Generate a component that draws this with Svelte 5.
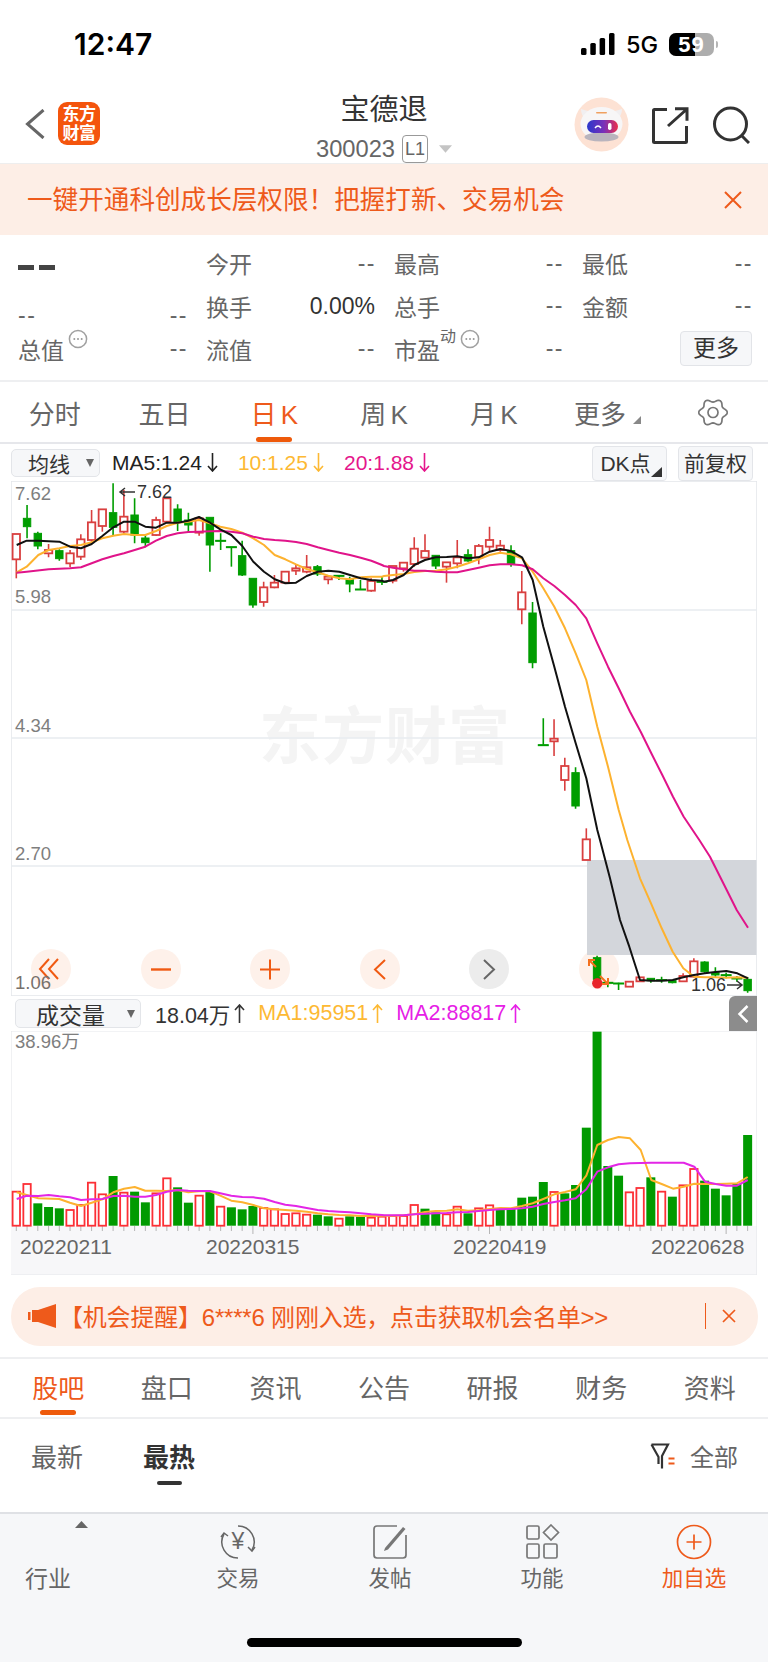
<script>
  // price candles: [high, bodyTop, bodyBottom, low, up?] read off the chart, in crop units
  const up = 1;
  const dn = 0;
  const scale = (origin, rows) =>
    rows.map(([h, t, b, l, dir]) => [origin + h / 3, origin + t / 3, origin + b / 3, origin + l / 3, dir]);

  const candles = [
    ...scale(470, [
      [192, 192, 268, 325, up], [105, 145, 170, 205, dn], [185, 190, 228, 238, dn], [222, 240, 250, 262, up],
      [238, 242, 266, 272, dn], [240, 250, 280, 292, up], [193, 208, 260, 270, up], [120, 157, 210, 215, up],
      [118, 118, 168, 185, up], [40, 128, 172, 195, dn], [60, 140, 185, 190, up], [85, 135, 195, 220, dn],
      [195, 204, 218, 232, dn], [140, 150, 195, 198, up], [85, 85, 155, 160, up], [103, 117, 155, 183, dn],
      [128, 150, 165, 188, dn], [140, 145, 188, 197, up], [142, 142, 225, 305, dn], [190, 211, 213, 240, dn],
      [230, 230, 232, 290, dn], [212, 257, 315, 318, dn], [325, 325, 405, 413, dn], [335, 352, 396, 410, up],
      [315, 338, 352, 355, up], [305, 305, 338, 340, up], [285, 295, 302, 315, up], [255, 292, 305, 310, up],
      [285, 290, 312, 318, dn], [315, 320, 328, 343, up], [316, 316, 318, 330, dn], [320, 328, 342, 367, dn],
      [330, 357, 359, 359, dn], [325, 333, 362, 365, up], [320, 334, 336, 345, dn]
    ]),
    ...scale(500, [
      [198, 198, 242, 250, up], [188, 188, 205, 215, up], [112, 146, 192, 200, up], [103, 153, 173, 175, up],
      [166, 166, 198, 207, dn], [187, 187, 200, 248, up], [120, 172, 190, 205, up], [148, 164, 183, 185, dn],
      [132, 138, 172, 193, up], [80, 120, 140, 155, up], [120, 137, 150, 155, up], [136, 152, 192, 200, dn],
      [213, 277, 328, 373, up], [306, 339, 488, 505, dn], [655, 734, 736, 737, dn], [658, 716, 724, 768, up],
      [773, 798, 840, 872, up], [802, 818, 918, 926, dn], [985, 1018, 1080, 1080, up]
    ]),
    ...scale(840, [
      [347, 353, 418, 440, dn], [422, 427, 429, 442, dn], [428, 429, 431, 450, dn], [425, 425, 440, 440, up],
      [412, 412, 424, 424, up], [415, 415, 422, 428, dn], [410, 419, 421, 428, dn], [422, 422, 428, 430, dn],
      [400, 408, 424, 426, up], [355, 364, 410, 412, up], [364, 366, 395, 398, dn], [382, 398, 405, 410, dn],
      [398, 404, 406, 415, dn], [408, 414, 416, 425, dn], [412, 418, 452, 458, dn]
    ])
  ];

  const xAt = (i) => 16.3 + i * 10.755;

  const line = (...parts) =>
    parts
      .flatMap(([ox, oy, pts]) => pts.map(([x, y]) => `${(ox + x / 3).toFixed(1)},${(oy + y / 3).toFixed(1)}`))
      .join(" ");

  const ma5 = line(
    [0, 470, [[50,225],[80,212],[115,212],[178,215],[210,230],[243,235],[275,222],[307,198],[340,172],[372,155],[404,155],[436,170],[468,173],[500,158],[533,158],[565,152],[597,141],[630,158],[661,178],[694,195],[727,228],[760,275],[792,305],[824,328],[856,340],[888,338],[920,318],[953,305],[985,302],[1018,305],[1050,315],[1082,325],[1114,330],[1146,332]]],
    [384, 500, [[0,245],[27,240],[59,225],[91,195],[123,180],[155,172],[188,171],[220,169],[252,175],[284,172],[317,155],[349,147],[381,153],[414,172],[446,240],[478,380],[511,500],[543,620],[575,730],[607,835],[640,990]]],
    [540, 840, [[180,0],[210,115],[240,240],[268,320],[300,420],[333,422],[365,422],[398,420],[430,412],[462,405],[494,400],[526,396],[559,393],[592,400],[624,415]]]
  );
  const ma10 = line(
    [0, 470, [[50,307],[80,290],[115,255],[146,240],[178,235],[210,228],[243,225],[275,217],[307,205],[340,197],[372,192],[404,195],[436,195],[468,183],[500,168],[533,158],[565,155],[597,150],[630,160],[661,170],[694,177],[727,188],[760,205],[792,225],[824,255],[856,268],[888,283],[920,297],[953,307],[985,317],[1018,325],[1050,328],[1082,322],[1114,320],[1146,320]]],
    [384, 500, [[0,228],[27,225],[59,222],[91,216],[123,213],[155,212],[188,208],[220,200],[252,190],[284,178],[317,165],[349,158],[381,163],[414,175],[446,215],[478,265],[511,320],[543,385],[575,460],[607,540],[640,680],[672,800],[704,930]]],
    [540, 840, [[262,0],[300,115],[333,190],[365,265],[398,335],[430,385],[462,410],[494,412],[526,412],[559,413],[592,412],[624,413]]]
  );
  const ma20 = line(
    [0, 470, [[50,308],[80,305],[146,298],[210,295],[243,292],[275,280],[307,268],[340,258],[372,250],[404,240],[436,230],[468,212],[500,198],[533,190],[565,186],[597,185],[630,184],[661,183],[694,185],[727,190],[760,200],[792,207],[824,210],[856,212],[888,216],[920,222],[953,232],[985,240],[1018,248],[1050,255],[1082,263],[1114,272],[1146,285]]],
    [384, 500, [[0,198],[27,203],[59,208],[91,212],[123,212],[155,215],[188,217],[220,217],[252,210],[284,203],[317,196],[349,193],[381,193],[414,196],[446,208],[478,235],[511,258],[543,285],[575,315],[607,355],[640,430],[672,500],[704,565],[738,635],[770,695],[802,760],[835,825],[867,890],[899,950]]],
    [540, 840, [[478,0],[510,50],[560,150],[590,210],[624,263]]]
  );

  // volume bars: top in crop units, red = hollow
  const volLeft = [
    [185,1],[162,1],[220,0],[231,0],[235,0],[240,1],[225,1],[158,1],[193,1],[138,0],[188,1],[185,0],[217,0],[190,1],[145,1],[172,0],[218,0],[197,1],[185,0],[230,1],[232,0],[238,0],[228,0],[234,1],[238,1],[252,1],[250,1],[254,1],[254,0],[259,0],[266,1],[259,0],[260,0],[263,1],[260,1]
  ];
  const volRight = [
    [558,1],[558,1],[525,1],[536,0],[547,0],[553,1],[530,1],[550,0],[535,1],[526,1],[537,0],[537,0],[503,0],[500,0],[456,0],[486,1],[490,0],[465,0],[293,0],[5,0],[408,0],[437,0],[487,1],[474,1],[442,0],[485,1],[500,0],[466,1],[417,1],[452,0],[476,0],[496,0],[462,0],[315,0]
  ];
  const volBase = 1225.7;
  const volumes = [
    ...volLeft.map(([t, r]) => [1130 + t / 3, r]),
    ...volRight.map(([t, r]) => [1030 + t / 3, r])
  ];

  const volMa1 = line(
    [0, 1130, [[50,187],[80,195],[115,205],[178,207],[210,218],[243,228],[275,218],[307,208],[340,187],[372,176],[404,171],[436,182],[468,182],[500,183],[533,180],[565,187],[597,184],[630,184],[661,197],[694,212],[727,217],[760,225],[792,235],[824,238],[856,240],[888,242],[920,245],[953,250],[985,253],[1018,255],[1050,256],[1082,258],[1114,258],[1146,257]]],
    [384, 1030, [[0,557],[27,557],[59,556],[91,553],[123,546],[155,543],[188,542],[220,538],[252,542],[284,541],[317,537],[349,534],[381,535],[414,528],[446,520],[478,507],[511,493],[543,486],[575,478],[607,437],[640,345],[672,330],[704,321],[738,325],[770,360],[802,450],[835,463],[867,476],[899,470],[931,461],[963,462],[995,462],[1027,461],[1059,460],[1091,441]]]
  );
  const volMa2 = line(
    [0, 1130, [[50,207],[80,197],[115,198],[146,195],[178,199],[210,202],[243,210],[275,208],[307,207],[340,198],[372,197],[404,200],[436,200],[468,195],[500,185],[533,180],[565,182],[597,183],[630,183],[661,190],[694,197],[727,201],[760,202],[792,206],[824,216],[856,224],[888,228],[920,234],[953,240],[985,243],[1018,245],[1050,247],[1082,250],[1114,253],[1146,255]]],
    [384, 1030, [[0,556],[27,556],[59,556],[91,553],[123,551],[155,550],[188,549],[220,547],[252,546],[284,543],[317,540],[349,538],[381,537],[414,535],[446,530],[478,522],[511,516],[543,511],[575,505],[607,478],[640,425],[672,412],[704,403],[738,400],[770,399],[802,398],[835,398],[867,398],[899,398],[931,410],[963,455],[995,462],[1027,467],[1059,467],[1091,450]]]
  );

  const periods = ["分时", "五日", "日K", "周K", "月K"];
  const infoTabs = ["股吧", "盘口", "资讯", "公告", "研报", "财务", "资料"];

  // six lobes, points left and right
  const gearOutline = Array.from({ length: 72 }, (_, i) => {
    const a = (i * 5 * Math.PI) / 180;
    const r = 12 + 1.6 * Math.cos(6 * a);
    return `${(15 + r * 1.05 * Math.cos(a)).toFixed(2)},${(13.5 + r * Math.sin(a)).toFixed(2)}`;
  }).join(" ");
</script>

{#snippet info()}
  <svg class="info" viewBox="0 0 20 20" fill="none">
    <circle cx="10" cy="10" r="8.6" stroke="#a0a0a0" stroke-width="1.500" />
    <circle cx="6.300" cy="10" r="1" fill="#999" />
    <circle cx="10" cy="10" r="1" fill="#999" />
    <circle cx="13.700" cy="10" r="1" fill="#999" />
  </svg>
{/snippet}

{#snippet arrow(color, rising)}
  <svg class="arrow" viewBox="0 0 11 19" fill="none" stroke={color} stroke-width="1.600">
    {#if rising}
      <path d="M5.500 19V1.500M1 6l4.500-5L10 6" />
    {:else}
      <path d="M5.500 0v17.500M1 13l4.500 5L10 13" />
    {/if}
  </svg>
{/snippet}

<div class="page">
  <div class="status">
    <span class="time">12:47</span>
    <div class="status-right">
      <svg class="signal" viewBox="0 0 34 22" fill="#000">
        <rect x="0" y="15" width="5.500" height="7" rx="1.500" />
        <rect x="9.300" y="10" width="5.500" height="12" rx="1.500" />
        <rect x="18.600" y="5" width="5.500" height="17" rx="1.500" />
        <rect x="28" y="0" width="5.500" height="22" rx="1.500" />
      </svg>
      <span class="net">5G</span>
      <div class="battery"><span class="level"></span><span class="pct">59</span></div>
      <span class="nub"></span>
    </div>
  </div>

  <header class="nav">
    <div class="nav-left">
      <svg class="back" viewBox="0 0 20 30" fill="none" stroke="#666" stroke-width="3">
        <path d="M18.500 1 2.500 15l16 14" />
      </svg>
      <div class="logo">东方<br />财富</div>
    </div>
    <div class="nav-title">
      <div class="name">宝德退</div>
      <div class="code">
        <span>300023</span>
        <span class="l1">L1</span>
        <svg class="code-tri" viewBox="0 0 14 8"><path d="M0 0h14L7 8z" fill="#c4c4c4" /></svg>
      </div>
    </div>
    <div class="nav-right">
      <svg class="avatar" viewBox="0 0 55 55">
        <defs>
          <linearGradient id="visor" x1="0" x2="1" y1="0" y2="0">
            <stop offset="0" stop-color="#2a38cc" />
            <stop offset="0.55" stop-color="#7a30b8" />
            <stop offset="1" stop-color="#ec2f4a" />
          </linearGradient>
        </defs>
        <circle cx="27.500" cy="27.500" r="27" fill="#fde2d4" />
        <path d="M7 12q0 7 5 10l5-7zM48 12q0 7-5 10l-5-7z" fill="#f1eff1" />
        <ellipse cx="27.500" cy="27" rx="21" ry="17" fill="#f7f6f7" />
        <ellipse cx="27.500" cy="40" rx="17" ry="4.500" fill="#b9b4bd" />
        <rect x="13" y="23" width="31" height="13" rx="6.500" fill="url(#visor)" />
        <path d="M21 31q3-4 6 0" fill="none" stroke="#fff" stroke-width="1.400" />
        <rect x="34" y="26" width="3.500" height="7" rx="1.700" fill="#fff" />
        <rect x="22" y="15" width="11" height="1.600" rx="0.800" fill="#f0a060" />
      </svg>
      <svg class="share" viewBox="0 0 37 37" fill="none" stroke="#333" stroke-width="3">
        <path d="M15 2.500H2.500a1 1 0 0 0-1 1v31a1 1 0 0 0 1 1h31a1 1 0 0 0 1-1V19" />
        <path d="M16 19 35 2M23 1.800h12v12" />
      </svg>
      <svg class="search" viewBox="0 0 38 38" fill="none" stroke="#333" stroke-width="3">
        <circle cx="18.500" cy="18" r="16" />
        <path d="m29 29 8 8" />
      </svg>
    </div>
  </header>

  <div class="promo">
    <span>一键开通科创成长层权限！把握打新、交易机会</span>
    <svg class="promo-x" viewBox="0 0 18 18" fill="none" stroke="#ee5a1b" stroke-width="2">
      <path d="m1 1 16 16M17 1 1 17" />
    </svg>
  </div>

  <section class="stats">
    <div class="cell"><span class="big"><i></i><i></i></span></div>
    <div class="cell"><span class="k">今开</span><span class="v">--</span></div>
    <div class="cell"><span class="k">最高</span><span class="v">--</span></div>
    <div class="cell"><span class="k">最低</span><span class="v">--</span></div>

    <div class="cell low"><span class="v">--</span><span class="v">--</span></div>
    <div class="cell"><span class="k">换手</span><span class="v num">0.00%</span></div>
    <div class="cell"><span class="k">总手</span><span class="v">--</span></div>
    <div class="cell"><span class="k">金额</span><span class="v">--</span></div>

    <div class="cell"><span class="k with-icon">总值{@render info()}</span><span class="v">--</span></div>
    <div class="cell"><span class="k">流值</span><span class="v">--</span></div>
    <div class="cell"><span class="k with-icon">市盈<sup>动</sup>{@render info()}</span><span class="v">--</span></div>
    <div class="cell more-cell"><span class="more">更多</span></div>
  </section>

  <nav class="periods">
    {#each periods as p, i}
      <span class="period" class:active={i === 2}>{p.replace("K", " K")}</span>
    {/each}
    <span class="period more-tab">更多<svg class="corner" viewBox="0 0 8 8"><path d="M8 0v8H0z" fill="#888" /></svg></span>
    <span class="period">
      <svg class="gear" viewBox="0 0 30 27" fill="none" stroke="#777" stroke-width="1.700">
        <polygon points={gearOutline} stroke-linejoin="round" />
        <circle cx="15" cy="13.500" r="5" />
      </svg>
    </span>
  </nav>

  <div class="ma-row">
    <span class="select ma-select">均线<svg class="tri" viewBox="0 0 8 8"><path d="M0 0h8L4 8z" fill="#666" /></svg></span>
    <span class="ma black">MA5:1.24{@render arrow("#222", false)}</span>
    <span class="ma orange">10:1.25{@render arrow("#fdb933", false)}</span>
    <span class="ma pink">20:1.88{@render arrow("#e5168c", false)}</span>
    <span class="chip dk">DK点<svg class="chip-corner" viewBox="0 0 11 10"><path d="M11 0v10H0z" fill="#333" /></svg></span>
    <span class="chip">前复权</span>
  </div>

  <div class="chart">
    <div class="controls">
      <span class="ctl">
        <svg viewBox="0 0 40 40" fill="none" stroke="#f05a12" stroke-width="2"><path d="M18 10 9 20l9 10M27 10l-9 10 9 10" /></svg>
      </span>
      <span class="ctl"><svg viewBox="0 0 40 40" fill="none" stroke="#f05a12" stroke-width="2.400"><path d="M10 20.500h20" /></svg></span>
      <span class="ctl"><svg viewBox="0 0 40 40" fill="none" stroke="#f05a12" stroke-width="2"><path d="M10 20.500h20M20 10.500v20" /></svg></span>
      <span class="ctl"><svg viewBox="0 0 40 40" fill="none" stroke="#f05a12" stroke-width="2"><path d="M25 11l-10 9.500 10 9.500" /></svg></span>
      <span class="ctl off"><svg viewBox="0 0 40 40" fill="none" stroke="#666" stroke-width="2"><path d="M15 11l10 9.500-10 9.500" /></svg></span>
      <span class="ctl"></span>
    </div>
    <svg class="plot" viewBox="11 481 746 515">
      <text class="watermark" x="385" y="759" text-anchor="middle">东方财富</text>
      <rect x="587" y="860" width="170" height="95" fill="#d3d6db" />
      <path d="M11 481H757M11 996H757M11 481V996M757 481V996" stroke="#e4e6ea" stroke-width="1.500" fill="none" />
      <path d="M11 610H757M11 738H757M11 866H587" stroke="#e8ebef" stroke-width="1.500" />

      {#each candles as [h, t, b, l, dir], i}
        {@const x = xAt(i)}
        {@const color = dir ? "#d93f3f" : "#009d00"}
        <path d="M{x} {h}V{t}M{x} {b}V{l}" stroke={color} stroke-width="1.600" />
        <rect
          x={x - (b - t < 2 ? 5 : 3.700)}
          y={t}
          width={b - t < 2 ? 10 : 7.400}
          height={Math.max(b - t, 1)}
          fill={dir ? "#fff" : color}
          stroke={color}
          stroke-width={dir ? 1.800 : 1}
        />
      {/each}

      <polyline points={ma10} class="ma-line" stroke="#fdb22f" />
      <polyline points={ma20} class="ma-line" stroke="#e0148a" />
      <polyline points={ma5} class="ma-line" stroke="#111" />

      <text class="axis" x="15" y="500">7.62</text>
      <text class="axis" x="15" y="603">5.98</text>
      <text class="axis" x="15" y="732">4.34</text>
      <text class="axis" x="15" y="860">2.70</text>
      <text class="axis low-label" x="15" y="989">1.06</text>

      <path d="M120 492h15M125 488l-5 4 5 4" stroke="#333" stroke-width="1.500" fill="none" />
      <text class="peak" x="137" y="498">7.62</text>
      <text class="peak" x="691" y="991">1.06</text>
      <path d="M727 985h15M737 981l5 4-5 4" stroke="#333" stroke-width="1.500" fill="none" />

      <circle cx="597.300" cy="983.300" r="5.200" fill="#e8242a" />
      <path d="M589 966v-6h6M589 960l7 7M608 978v6h-6M608 984l-8-8" stroke="#f4701e" stroke-width="2" fill="none" />
    </svg>
  </div>

  <div class="vol-row">
    <span class="select vol-select">成交量<svg class="tri" viewBox="0 0 8 8"><path d="M0 0h8L4 8z" fill="#666" /></svg></span>
    <span class="ma dark">18.04万{@render arrow("#333", true)}</span>
    <span class="ma orange">MA1:95951{@render arrow("#fdb933", true)}</span>
    <span class="ma magenta">MA2:88817{@render arrow("#e620e6", true)}</span>
    <span class="fold">
      <svg viewBox="0 0 12 20" fill="none" stroke="#fff" stroke-width="2.500"><path d="M10.500 2 2.500 10l8 8" /></svg>
    </span>
  </div>

  <div class="volume">
    <svg class="plot-vol" viewBox="11 1031 746 244">
      <rect x="11" y="1226" width="746" height="49" fill="#f7f7f9" />
      <path d="M11 1031H757M11 1031V1226M757 1031V1275M11 1275H757" stroke="#e6e8ec" stroke-width="1.200" fill="none" />

      {#each volumes as [top, red], i}
        {@const x = xAt(i)}
        <path d="M{x} 1226V{i % 22 === 0 && i > 0 ? 1234 : 1231}" stroke="#b5b5b5" stroke-width="1" />
        {#if red}
          <rect x={x - 3.700} y={top} width="7.400" height={volBase - top} fill="#fff" stroke="#fc2f35" stroke-width="1.800" />
        {:else}
          <rect x={x - 4.500} y={top} width="9" height={volBase - top} fill="#009a00" />
        {/if}
      {/each}

      <polyline points={volMa1} class="ma-line" stroke="#fdb22f" />
      <polyline points={volMa2} class="ma-line" stroke="#e326e6" />

      <text class="axis" x="15" y="1048">38.96万</text>
      <text class="date" x="20" y="1254">20220211</text>
      <text class="date" x="206" y="1254">20220315</text>
      <text class="date" x="453" y="1254">20220419</text>
      <text class="date" x="651" y="1254">20220628</text>
    </svg>
  </div>

  <div class="notice">
    <svg class="horn" viewBox="0 0 28 24" fill="#ee5a1b">
      <rect x="0" y="8" width="2.500" height="8" />
      <path d="M4 6h6L28 0v24L10 18H4z" />
    </svg>
    <span class="notice-text">【机会提醒】6****6 刚刚入选，点击获取机会名单&gt;&gt;</span>
    <span class="notice-sep"></span>
    <svg class="notice-x" viewBox="0 0 14 14" fill="none" stroke="#ee5a1b" stroke-width="1.700">
      <path d="m1 1 12 12M13 1 1 13" />
    </svg>
  </div>

  <nav class="info-tabs">
    {#each infoTabs as t, i}
      <span class="info-tab" class:active={i === 0}>{t}</span>
    {/each}
  </nav>

  <div class="sub-tabs">
    <span class="sub">最新</span>
    <span class="sub hot">最热</span>
    <span class="filter">
      <svg viewBox="0 0 25 26" fill="none" stroke="#333" stroke-width="2.200">
        <path d="M1.500 1.500h16.500L12 13v12.500M1.500 1.500 8.500 14v7" />
        <path d="M18.500 15.500h6M18.500 20.500h6" stroke="#ee5a1b" />
      </svg>
      全部
    </span>
  </div>

  <footer class="bottom">
    <div class="item industry">
      <svg class="up-tri" viewBox="0 0 13 7"><path d="M0 7h13L6.500 0z" fill="#666" /></svg>
      <span>行业</span>
    </div>
    <div class="item">
      <svg class="icon" viewBox="0 0 36 36" fill="none" stroke="#666" stroke-width="1.500">
        <path d="M18 2A16 16 0 0 1 32 26M18 34A16 16 0 0 1 4 10" />
        <path d="m28 23 4 4 3-4M1 13l3-4 4 3" />
      </svg>
      <span class="yen">¥</span>
      <span>交易</span>
    </div>
    <div class="item">
      <svg class="icon" viewBox="0 0 36 36" fill="none" stroke="#777" stroke-width="1.700">
        <path d="M25 2H5Q2 2 2 5v26q0 3 3 3h26q3 0 3-3V11" />
        <path d="M13 24 31 3l2.500 2L16 25.500l-4 1.500z" fill="#777" stroke="none" />
      </svg>
      <span>发帖</span>
    </div>
    <div class="item">
      <svg class="icon" viewBox="0 0 36 36" fill="none" stroke="#777" stroke-width="1.700">
        <rect x="3" y="2" width="12" height="13" rx="1.500" />
        <path d="m27 1 7.500 7.500L27 16l-7.500-7.500z" />
        <rect x="3" y="20" width="12" height="14" rx="1.500" />
        <rect x="20" y="20" width="13" height="14" rx="1.500" />
      </svg>
      <span>功能</span>
    </div>
    <div class="item accent">
      <svg class="icon" viewBox="0 0 36 36" fill="none" stroke="#ee5a1b" stroke-width="1.700">
        <circle cx="18" cy="18" r="16.500" />
        <path d="M18 10.500v15M10.500 18h15" />
      </svg>
      <span>加自选</span>
    </div>
    <div class="home"></div>
  </footer>
</div>

<style>
  :global(body) {
    margin: 0;
    background: #fff;
  }
  .page {
    width: 768px;
    height: 1662px;
    overflow: hidden;
    background: #fff;
    font-family: "Liberation Sans", "Noto Sans CJK SC", sans-serif;
    color: #666;
  }

  /* status bar */
  .status {
    height: 82px;
    box-sizing: border-box;
    padding: 26px 50px 0 74px;
    display: flex;
    justify-content: space-between;
    align-items: flex-start;
  }
  .time {
    font-family: Inter, sans-serif;
    font-size: 30px;
    font-weight: 600;
    line-height: 36px;
    color: #000;
  }
  .status-right {
    display: flex;
    align-items: center;
    height: 36px;
    position: relative;
  }
  .signal {
    width: 34px;
    height: 22px;
  }
  .net {
    font-family: Inter, sans-serif;
    font-size: 23.500px;
    font-weight: 500;
    color: #000;
    margin: 0 11px 0 11px;
  }
  .battery {
    position: relative;
    width: 45px;
    height: 23px;
    border-radius: 7px;
    background: #adadad;
    display: flex;
    align-items: center;
    justify-content: center;
  }
  .level {
    position: absolute;
    inset: 0 19px 0 0;
    background: #000;
    border-radius: 7px 0 0 7px;
  }
  .pct {
    position: relative;
    font-size: 22px;
    font-weight: 700;
    font-family: "Liberation Sans", sans-serif;
    color: #fff;
    line-height: 23px;
    letter-spacing: 1px;
  }
  .nub {
    width: 2px;
    height: 7px;
    margin-left: 2px;
    background: #b5b5b5;
    border-radius: 0 2px 2px 0;
  }

  /* title bar */
  .nav {
    height: 82px;
    box-sizing: border-box;
    padding: 0 18px;
    display: grid;
    grid-template-columns: 1fr auto 1fr;
    align-items: start;
    border-bottom: 1px solid #eee;
  }
  .nav-left {
    display: flex;
    align-items: center;
    gap: 13px;
    padding: 20px 0 0 7px;
  }
  .back {
    width: 20px;
    height: 30px;
  }
  .logo {
    width: 42px;
    height: 43px;
    border-radius: 9px;
    background: #f4550d;
    color: #fff;
    font-size: 17px;
    font-weight: 700;
    line-height: 19px;
    text-align: center;
    padding-top: 3px;
    box-sizing: border-box;
    letter-spacing: -0.500px;
  }
  .nav-title {
    text-align: center;
  }
  .name {
    font-size: 29px;
    line-height: 40px;
    margin-top: 8px;
    color: #333;
  }
  .code {
    display: flex;
    align-items: center;
    justify-content: center;
    gap: 7px;
    margin-top: 5px;
    font-size: 23.700px;
    line-height: 26px;
    color: #666;
  }
  .l1 {
    border: 1px solid #999;
    border-radius: 4px;
    padding: 0 2px;
    font-size: 18px;
    line-height: 26px;
  }
  .code-tri {
    width: 13px;
    height: 8px;
    margin-left: 4px;
  }
  .nav-right {
    display: flex;
    align-items: flex-start;
    justify-content: flex-end;
    padding-top: 15px;
  }
  .avatar {
    width: 55px;
    height: 55px;
    margin-right: 23px;
  }
  .share {
    width: 37px;
    height: 37px;
    margin: 10px 23px 0 0;
  }
  .search {
    width: 38px;
    height: 38px;
    margin-top: 9px;
  }

  .promo {
    height: 71px;
    box-sizing: border-box;
    padding: 0 26px 4px 27px;
    background: #fdeee6;
    display: flex;
    align-items: center;
    justify-content: space-between;
    color: #ee5a1b;
    font-size: 25.600px;
  }
  .promo-x {
    width: 18px;
    height: 18px;
    margin-top: 4px;
  }

  /* quote grid */
  .stats {
    height: 147px;
    box-sizing: border-box;
    padding: 7px 16px 0 18px;
    display: grid;
    grid-template-columns: 169px 169px 169px 170px;
    grid-template-rows: 42px 43px 43px;
    column-gap: 19px;
    border-bottom: 2px solid #eeeff1;
    font-size: 23px;
  }
  .cell {
    display: flex;
    align-items: center;
    justify-content: space-between;
    white-space: nowrap;
  }
  .cell.low {
    padding-top: 19px;
  }
  .big {
    display: flex;
    gap: 5px;
    margin-top: 9px;
  }
  .big i {
    width: 16px;
    height: 5px;
    background: #444;
  }
  .k {
    color: #666;
  }
  .with-icon {
    display: flex;
    align-items: flex-start;
  }
  sup {
    font-size: 16px;
    line-height: 16px;
    margin-top: -3px;
  }
  .info {
    width: 20px;
    height: 20px;
    margin-top: -3px;
    margin-left: 4px;
  }
  .v {
    color: #666;
    letter-spacing: 1.500px;
    margin-right: -1px;
  }
  .v.num {
    color: #333;
    letter-spacing: 0;
    margin-right: 0;
    font-size: 23px;
    padding-top: 2px;
  }
  .more-cell {
    justify-content: flex-end;
  }
  .more {
    width: 72px;
    height: 35px;
    line-height: 33px;
    box-sizing: border-box;
    text-align: center;
    color: #333;
    background: #f6f7f9;
    border: 1px solid #e2e4e8;
    border-radius: 4px;
  }

  .periods {
    height: 62px;
    box-sizing: border-box;
    display: grid;
    grid-template-columns: repeat(7, 1fr);
    align-items: center;
    border-bottom: 2px solid #e6e7eb;
    font-size: 26px;
    color: #666;
  }
  .period {
    position: relative;
    display: flex;
    justify-content: center;
    align-items: center;
    white-space: pre;
    word-spacing: -3px;
  }
  .more-tab {
    padding-right: 7px;
  }
  .period.active {
    color: #ee5a1b;
  }
  .period.active::after {
    content: "";
    position: absolute;
    left: 50%;
    margin-left: -18px;
    bottom: -11px;
    width: 36px;
    height: 5px;
    border-radius: 3px;
    background: #ee5a0b;
  }
  .corner {
    position: absolute;
    left: 84px;
    top: 22px;
    width: 8px;
    height: 8px;
  }
  .gear {
    width: 30px;
    height: 27px;
  }

  .ma-row {
    height: 37px;
    display: flex;
    align-items: center;
    padding: 0 15px 0 11px;
    position: relative;
  }
  .select {
    display: flex;
    align-items: center;
    justify-content: space-between;
    box-sizing: border-box;
    background: #f6f7f9;
    border: 1px solid #e3e5e9;
    border-radius: 5px;
    color: #333;
    font-size: 21px;
  }
  .ma-select {
    width: 89px;
    height: 28px;
    padding: 0 5px 0 16px;
  }
  .tri {
    width: 8px;
    height: 8px;
  }
  .ma {
    display: inline-flex;
    align-items: center;
    gap: 5px;
    font-size: 21px;
    white-space: nowrap;
  }
  .arrow {
    width: 11px;
    height: 19px;
  }
  .black {
    margin-left: 12px;
    color: #222;
  }
  .orange {
    margin-left: 20px;
    color: #fdb933;
  }
  .pink {
    margin-left: 20px;
    color: #e5168c;
  }
  .chip {
    position: relative;
    box-sizing: border-box;
    width: 75px;
    height: 35px;
    line-height: 33px;
    text-align: center;
    background: #f6f7f9;
    border: 1px solid #e3e5e9;
    border-radius: 4px;
    font-size: 21px;
    color: #333;
    align-self: flex-end;
  }
  .dk {
    margin-left: auto;
    margin-right: 11px;
    padding-right: 8px;
  }
  .chip-corner {
    position: absolute;
    right: 4px;
    bottom: 3px;
    width: 11px;
    height: 10px;
  }

  .chart {
    position: relative;
    height: 515px;
    margin-left: 11px;
    width: 746px;
  }
  .plot {
    position: relative;
    z-index: 1;
    display: block;
    width: 746px;
    height: 515px;
  }
  .controls {
    position: absolute;
    left: 20px;
    top: 468px;
    display: flex;
    gap: 69.500px;
  }
  .ctl {
    width: 40px;
    height: 40px;
    border-radius: 50%;
    background: #fef1ea;
  }
  .ctl.off {
    background: #ececec;
  }
  .ctl svg {
    display: block;
    width: 40px;
    height: 40px;
  }
  .ma-line {
    fill: none;
    stroke-width: 2;
    stroke-linejoin: round;
  }
  .watermark {
    font-family: "Noto Sans CJK SC", sans-serif;
    font-size: 62px;
    font-weight: 700;
    fill: #f4f4f4;
    letter-spacing: 1px;
  }
  .axis {
    font-family: "Liberation Sans", "Noto Sans CJK SC", sans-serif;
    font-size: 18.500px;
    fill: #7e7e7e;
  }
  .low-label {
    fill: #76706c;
  }
  .peak {
    font-family: "Liberation Sans", sans-serif;
    font-size: 18px;
    fill: #333;
  }
  .date {
    font-family: "Liberation Sans", sans-serif;
    font-size: 21px;
    fill: #666;
  }

  .vol-row {
    height: 35px;
    display: flex;
    align-items: center;
    padding: 0 11px 0 15px;
  }
  .vol-row .ma {
    font-size: 21.500px;
    gap: 4px;
  }
  .vol-select {
    width: 126px;
    height: 29px;
    padding: 0 5px 0 20px;
    font-size: 23px;
  }
  .dark {
    margin-left: 14px;
    color: #333;
  }
  .vol-row .orange {
    margin-left: 13px;
  }
  .magenta {
    margin-left: 13px;
    color: #e620e6;
  }
  .fold {
    margin-left: auto;
    width: 28px;
    height: 35px;
    background: #8c8c8c;
    border-top-left-radius: 6px;
    display: flex;
    align-items: center;
    justify-content: center;
  }
  .fold svg {
    width: 12px;
    height: 20px;
  }

  .volume {
    height: 244px;
    margin-left: 11px;
  }
  .plot-vol {
    display: block;
    width: 746px;
    height: 244px;
  }

  .notice {
    height: 59px;
    box-sizing: border-box;
    margin: 12px 10px 0 11px;
    padding: 0 22px 2px 17px;
    border-radius: 29px;
    background: #fdeee6;
    display: flex;
    align-items: center;
    color: #ee5a1b;
    font-size: 24px;
    white-space: nowrap;
  }
  .horn {
    width: 28px;
    height: 24px;
    margin-right: 3px;
  }
  .notice-text {
    letter-spacing: -0.200px;
  }
  .notice-sep {
    width: 1px;
    height: 26px;
    background: #ee5a1b;
    margin-left: auto;
    margin-right: 16px;
  }
  .notice-x {
    width: 14px;
    height: 14px;
  }

  .info-tabs {
    height: 62px;
    margin-top: 11px;
    box-sizing: border-box;
    padding: 0 4px 3px;
    display: grid;
    grid-template-columns: repeat(7, 1fr);
    align-items: center;
    border-top: 2px solid #eeeff1;
    border-bottom: 2px solid #eeeff1;
    font-size: 26px;
    text-align: center;
  }
  .info-tab {
    position: relative;
  }
  .info-tab.active {
    color: #ee5a1b;
  }
  .info-tab.active::after {
    content: "";
    position: absolute;
    left: 50%;
    margin-left: -18px;
    bottom: -10px;
    width: 36px;
    height: 5px;
    border-radius: 3px;
    background: #ee5a0b;
  }

  .sub-tabs {
    height: 93px;
    box-sizing: border-box;
    padding: 0 30px 20px 31px;
    display: flex;
    align-items: center;
    font-size: 26px;
  }
  .sub.hot {
    position: relative;
    margin-left: 60px;
    font-weight: 700;
    color: #333;
  }
  .sub.hot::after {
    content: "";
    position: absolute;
    left: 14px;
    bottom: -11px;
    width: 25px;
    height: 4px;
    border-radius: 2px;
    background: #333;
  }
  .filter {
    margin-left: auto;
    display: flex;
    align-items: center;
    gap: 15px;
    font-size: 24px;
  }
  .filter svg {
    width: 25px;
    height: 26px;
  }

  .bottom {
    position: relative;
    height: 150px;
    box-sizing: border-box;
    padding: 10px 0 0 10px;
    display: grid;
    grid-template-columns: repeat(5, 152px);
    align-content: start;
    background: #f6f7f9;
    border-top: 2px solid #dfe1e5;
    font-size: 21.500px;
    color: #666;
  }
  .item {
    position: relative;
    display: flex;
    flex-direction: column;
    align-items: center;
    gap: 1px;
  }
  .item.accent {
    color: #ee5a1b;
  }
  .icon {
    width: 36px;
    height: 36px;
  }
  .yen {
    position: absolute;
    top: 5px;
    left: 0;
    right: 0;
    text-align: center;
    font-size: 23px;
    line-height: 24px;
  }
  .industry {
    align-items: flex-start;
    gap: 0;
    font-size: 23px;
  }
  .up-tri {
    width: 13px;
    height: 7px;
    margin: -3px 0 0 65px;
  }
  .industry span {
    margin: 32px 0 0 15px;
  }
  .home {
    position: absolute;
    left: 247px;
    top: 124px;
    width: 275px;
    height: 9px;
    border-radius: 5px;
    background: #000;
  }
</style>
